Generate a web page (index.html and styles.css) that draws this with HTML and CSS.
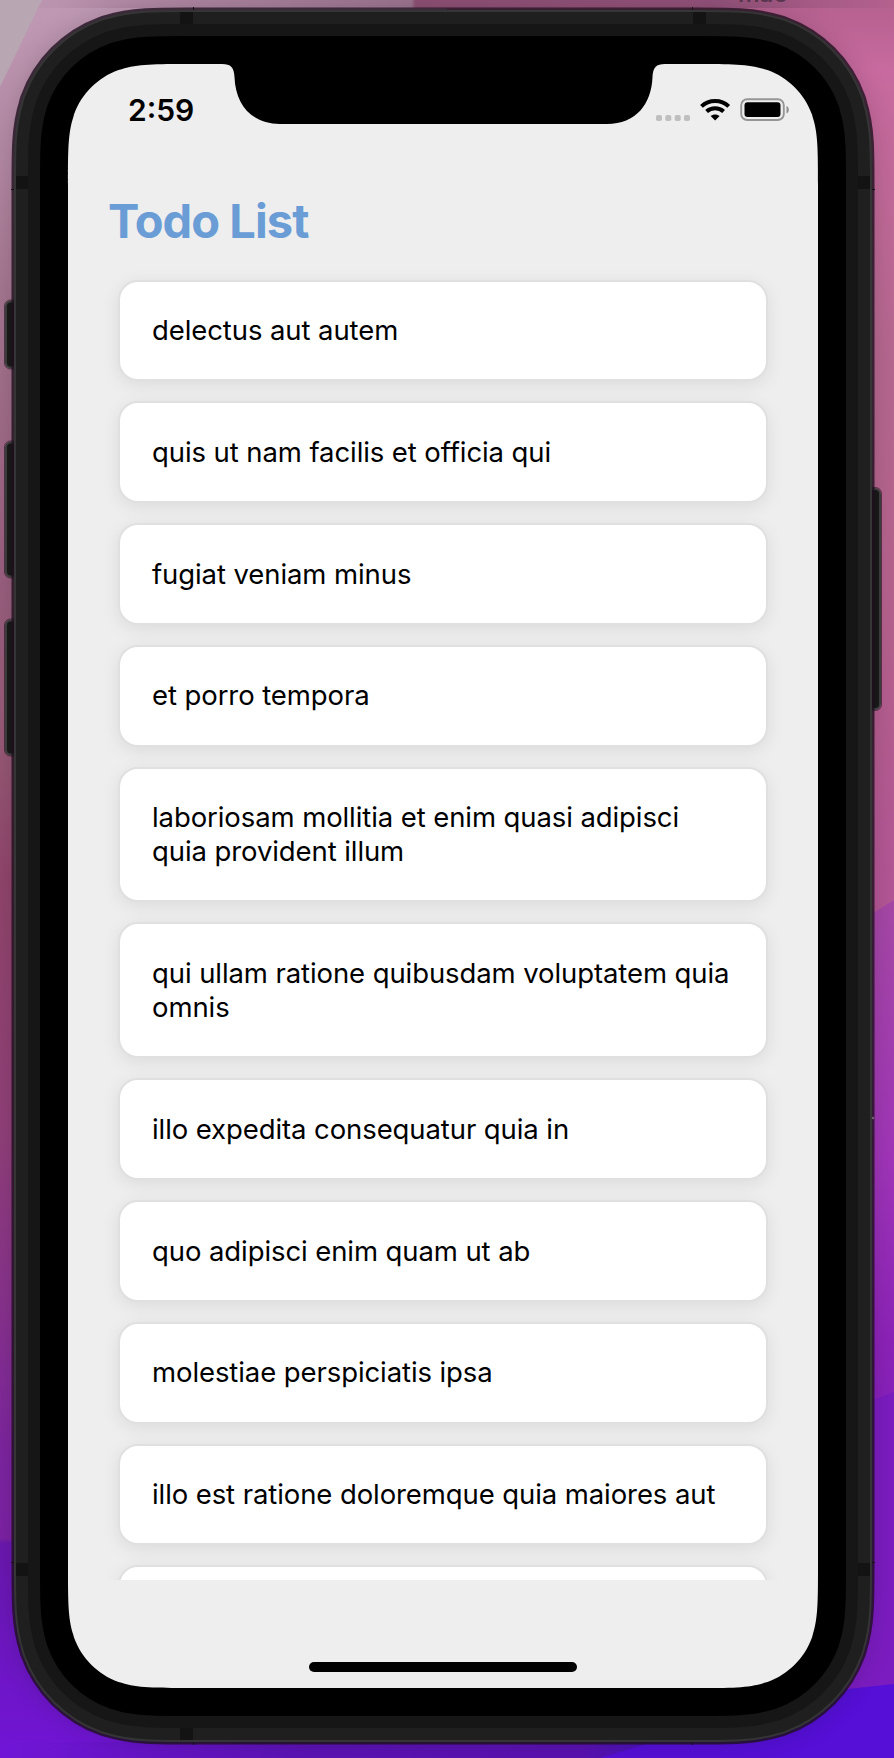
FILE: index.html
```html
<!DOCTYPE html>
<html lang="en">
<head>
<meta charset="utf-8">
<title>Todo List</title>
<link rel="stylesheet" href="styles.css">
</head>
<body>
<div class="desktop">
  <div class="window-label">mac</div>
  <svg class="scene" width="894" height="1758" viewBox="0 0 894 1758" aria-hidden="true">
    <defs>
      <linearGradient id="wallLeft" x1="0" y1="0" x2="0" y2="1">
        <stop offset="0" stop-color="#c09ab5"/><stop offset=".08" stop-color="#b48aa5"/><stop offset=".17" stop-color="#a4758f"/>
        <stop offset=".32" stop-color="#99607f"/><stop offset=".42" stop-color="#965a76"/><stop offset=".5" stop-color="#90456b"/>
        <stop offset=".64" stop-color="#904078"/><stop offset=".75" stop-color="#87318f"/><stop offset=".83" stop-color="#7c24a0"/>
        <stop offset=".875" stop-color="#7c22a4"/><stop offset=".878" stop-color="#6a18ae"/><stop offset="1" stop-color="#7015d6"/>
      </linearGradient>
      <linearGradient id="wallRight" x1="0" y1="0" x2="0" y2="1">
        <stop offset="0" stop-color="#b4618e"/><stop offset=".04" stop-color="#c86a9f"/><stop offset=".2" stop-color="#b5678f"/>
        <stop offset=".35" stop-color="#b4618c"/><stop offset=".5" stop-color="#b35695"/><stop offset="1" stop-color="#b35695"/>
      </linearGradient>
      <linearGradient id="wallPurple" x1="0" y1="0" x2="0" y2="1">
        <stop offset="0" stop-color="#a548a5"/><stop offset=".3" stop-color="#a035b8"/><stop offset=".52" stop-color="#8b22b8"/>
        <stop offset=".8" stop-color="#7a1cc2"/><stop offset="1" stop-color="#6518ca"/>
      </linearGradient>
      <linearGradient id="wallTop" x1="0" y1="0" x2="1" y2="0">
        <stop offset="0" stop-color="#c09ab5"/><stop offset=".12" stop-color="#b48ca8"/><stop offset=".46" stop-color="#9c7490"/>
        <stop offset=".465" stop-color="#8d5075"/><stop offset=".8" stop-color="#93527a"/><stop offset="1" stop-color="#b4618e"/>
      </linearGradient>
      <linearGradient id="wallBottom" x1="0" y1="0" x2="1" y2="0">
        <stop offset="0" stop-color="#7015d6"/><stop offset=".35" stop-color="#5b12b4"/><stop offset=".65" stop-color="#5a11b0"/>
        <stop offset=".7" stop-color="#4e12b4"/><stop offset="1" stop-color="#5810dc"/>
      </linearGradient>
      <filter id="soft" x="-10%" y="-10%" width="120%" height="120%"><feGaussianBlur stdDeviation="14"/></filter>
      <path id="screenShape" d="M190.3 64H695.7C730.9 64 748.5 64 764.4 69.2L767.5 70C788.2 77.5 804.5 93.8 812 114.5L812.8 117.6C818 133.5 818 151.1 818 186.3V1565.7C818 1600.9 818 1618.5 812.8 1634.4L812 1637.5C804.5 1658.2 788.2 1674.5 767.5 1682L764.4 1682.8C748.5 1688 730.9 1688 695.7 1688H190.3C155.1 1688 137.5 1688 121.6 1682.8L118.5 1682C97.8 1674.5 81.5 1658.2 74 1637.5L73.2 1634.4C68 1618.5 68 1600.9 68 1565.7V186.3C68 151.1 68 133.5 73.2 117.6L74 114.5C81.5 93.8 97.8 77.5 118.5 70L121.6 69.2C137.5 64 155.1 64 190.3 64Z"/>
    </defs>
    <!-- wallpaper -->
    <rect width="447" height="1758" fill="url(#wallLeft)"/>
    <rect x="447" width="447" height="1758" fill="url(#wallRight)"/>
    <rect width="894" height="8" fill="url(#wallTop)"/>
    <path d="M0 0H42L0 87Z" fill="#b8a6b3"/>
    <path d="M894 900L860 921V1500H447V1758H894Z" fill="url(#wallPurple)"/>
    <path d="M894 1392L860 1405V1500H447V1758H894Z" fill="#7b1cc0"/>
    <rect y="1742" width="894" height="16" fill="url(#wallBottom)"/>
    <path d="M894 1684L820 1692L600 1758H894Z" fill="#550fd6"/>
    <!-- shadow under the device -->
    <use href="#screenShape" fill="none" stroke="#000" stroke-width="104" opacity=".2" filter="url(#soft)"/>
    <!-- side buttons -->
    <g fill="#171717" stroke="#3b3b3b" stroke-width="2">
      <rect x="6" y="301.500" width="16" height="66" rx="5"/>
      <rect x="6" y="442.500" width="16" height="134" rx="5"/>
      <rect x="6" y="620.500" width="16" height="134" rx="5"/>
      <rect x="864" y="489" width="16" height="220" rx="5"/>
    </g>
    <g fill="none" stroke="#1c111a" stroke-opacity=".6">
      <rect x="4.500" y="300" width="19" height="69" rx="6"/>
      <rect x="4.500" y="441" width="19" height="137" rx="6"/>
      <rect x="4.500" y="619" width="19" height="137" rx="6"/>
      <rect x="864" y="487.500" width="17.500" height="223" rx="6"/>
    </g>
    <!-- device body, outermost ring first -->
    <g fill="none">
      <use href="#screenShape" stroke="#1e101e" stroke-opacity=".8" stroke-width="113"/>
      <use href="#screenShape" stroke="#353535" stroke-width="108"/>
      <use href="#screenShape" stroke="#1f1f1f" stroke-width="104"/>
      <use href="#screenShape" stroke="#161616" stroke-width="80"/>
    </g>
    <g fill="#131313">
      <rect x="180" y="12" width="13" height="12"/><rect x="693" y="12" width="13" height="12"/>
      <rect x="16" y="176" width="12" height="13"/><rect x="858" y="176" width="12" height="13"/>
      <rect x="16" y="1563" width="12" height="13"/><rect x="858" y="1563" width="12" height="13"/>
      <rect x="180" y="1728" width="13" height="12"/>
      <rect x="193" y="7" width="1" height="3"/><rect x="692" y="7" width="1" height="3"/>
      <rect x="193" y="1742" width="1" height="3"/><rect x="692" y="1742" width="1" height="3"/>
      <rect x="11" y="189" width="3" height="1"/><rect x="872" y="189" width="3" height="1"/>
      <rect x="11" y="1562" width="3" height="1"/><rect x="872" y="1562" width="3" height="1"/>
    </g>
    <circle cx="873" cy="1118" r="1.300" fill="#6f5f70"/>
    <use href="#screenShape" fill="#eee" stroke="#000" stroke-width="56"/>
    <use href="#screenShape" fill="#eee"/>
    <path d="M222 62V64C231 64 234 67.500 234.500 77C235.500 104 251 124 280 124H607C636 124 651.500 104 652.500 77C653 67.500 656 64 665 64V62Z" fill="#000"/>
  </svg>

  <main class="screen">
    <header class="status">
      <time class="clock">2:59</time>
      <svg class="status-icons" width="136" height="26" viewBox="0 0 136 26" aria-label="Signal, Wi-Fi and battery">
        <g fill="#bfbfbf">
          <rect x="1" y="17" width="6" height="6" rx="1.800"/><rect x="10.300" y="17" width="6" height="6" rx="1.800"/>
          <rect x="19.700" y="17" width="6" height="6" rx="1.800"/><rect x="29" y="17" width="6" height="6" rx="1.800"/>
        </g>
        <g fill="none" stroke="#000" stroke-width="4">
          <path d="M46.500 8.400C54 1.200 66.200 1.200 73.700 8.400"/>
          <path d="M51.600 13.500C56.300 9.200 63.900 9.200 68.600 13.500"/>
        </g>
        <path d="M55.600 18C58 15.900 62.200 15.900 64.600 18L60.100 22.600Z"/>
        <rect x="86.200" y="1.200" width="42.600" height="20.800" rx="6" fill="none" stroke="#969696" stroke-width="1.900"/>
        <rect x="89.500" y="4.200" width="36" height="14.800" rx="3"/>
        <path d="M131.500 8V15.600C134.500 14.500 134.500 9 131.500 8Z" fill="#8c8c8c"/>
      </svg>
    </header>
    <h1 class="title">Todo List</h1>
    <ul class="todos">
      <li class="todo">delectus aut autem</li>
      <li class="todo">quis ut nam facilis et officia qui</li>
      <li class="todo">fugiat veniam minus</li>
      <li class="todo">et porro tempora</li>
      <li class="todo">laboriosam mollitia et enim quasi adipisci<br>quia provident illum</li>
      <li class="todo">qui ullam ratione quibusdam voluptatem quia<br>omnis</li>
      <li class="todo">illo expedita consequatur quia in</li>
      <li class="todo">quo adipisci enim quam ut ab</li>
      <li class="todo">molestiae perspiciatis ipsa</li>
      <li class="todo">illo est ratione doloremque quia maiores aut</li>
      <li class="todo">&nbsp;</li>
    </ul>
    <div class="home-indicator"></div>
  </main>
</div>
</body>
</html>
```
FILE: styles.css
```css
* { box-sizing: border-box; }

body {
  margin: 0;
  font-family: Inter, "Liberation Sans", sans-serif;
  color: #000;
}

.desktop {
  position: relative;
  width: 894px;
  height: 1758px;
  padding: 64px 76px 70px 68px;
  overflow: hidden;
}

.scene {
  position: absolute;
  inset: 0;
}

.window-label {
  position: absolute;
  z-index: 1;
  top: -22px;
  left: 738px;
  font-size: 24px;
  font-weight: 600;
  line-height: 32px;
  color: #59364d;
}

.screen {
  position: relative;
  display: flex;
  flex-direction: column;
  height: 1624px;
}

.status {
  display: flex;
  justify-content: space-between;
  align-items: flex-start;
  height: 116px;
  padding: 34px 27px 0 60px;
}

.clock {
  font-size: 30px;
  font-weight: 600;
  line-height: 24px;
}

.title {
  margin: 0;
  padding-left: 40px;
  font-size: 47px;
  font-weight: 700;
  line-height: 82px;
  letter-spacing: -.95px;
  color: #6a9cd6;
}

.todos {
  display: flex;
  flex-direction: column;
  gap: 20px;
  flex: none;
  height: 1318px;
  margin: 0;
  padding: 17.500px 50px 0;
  list-style: none;
  overflow: hidden;
}

.todo {
  flex: none;
  padding: 31.500px 0 32.300px 32px;
  border: 2px solid #e0e0e0;
  border-radius: 20px;
  background: #fff;
  box-shadow: 0 4px 18px rgba(0, 0, 0, .08);
  font-size: 27.500px;
  line-height: 34px;
  letter-spacing: -.09px;
  white-space: nowrap;
}

.home-indicator {
  flex: none;
  width: 268px;
  height: 10px;
  margin: 82px auto 0;
  border-radius: 5px;
  background: #000;
}
```
